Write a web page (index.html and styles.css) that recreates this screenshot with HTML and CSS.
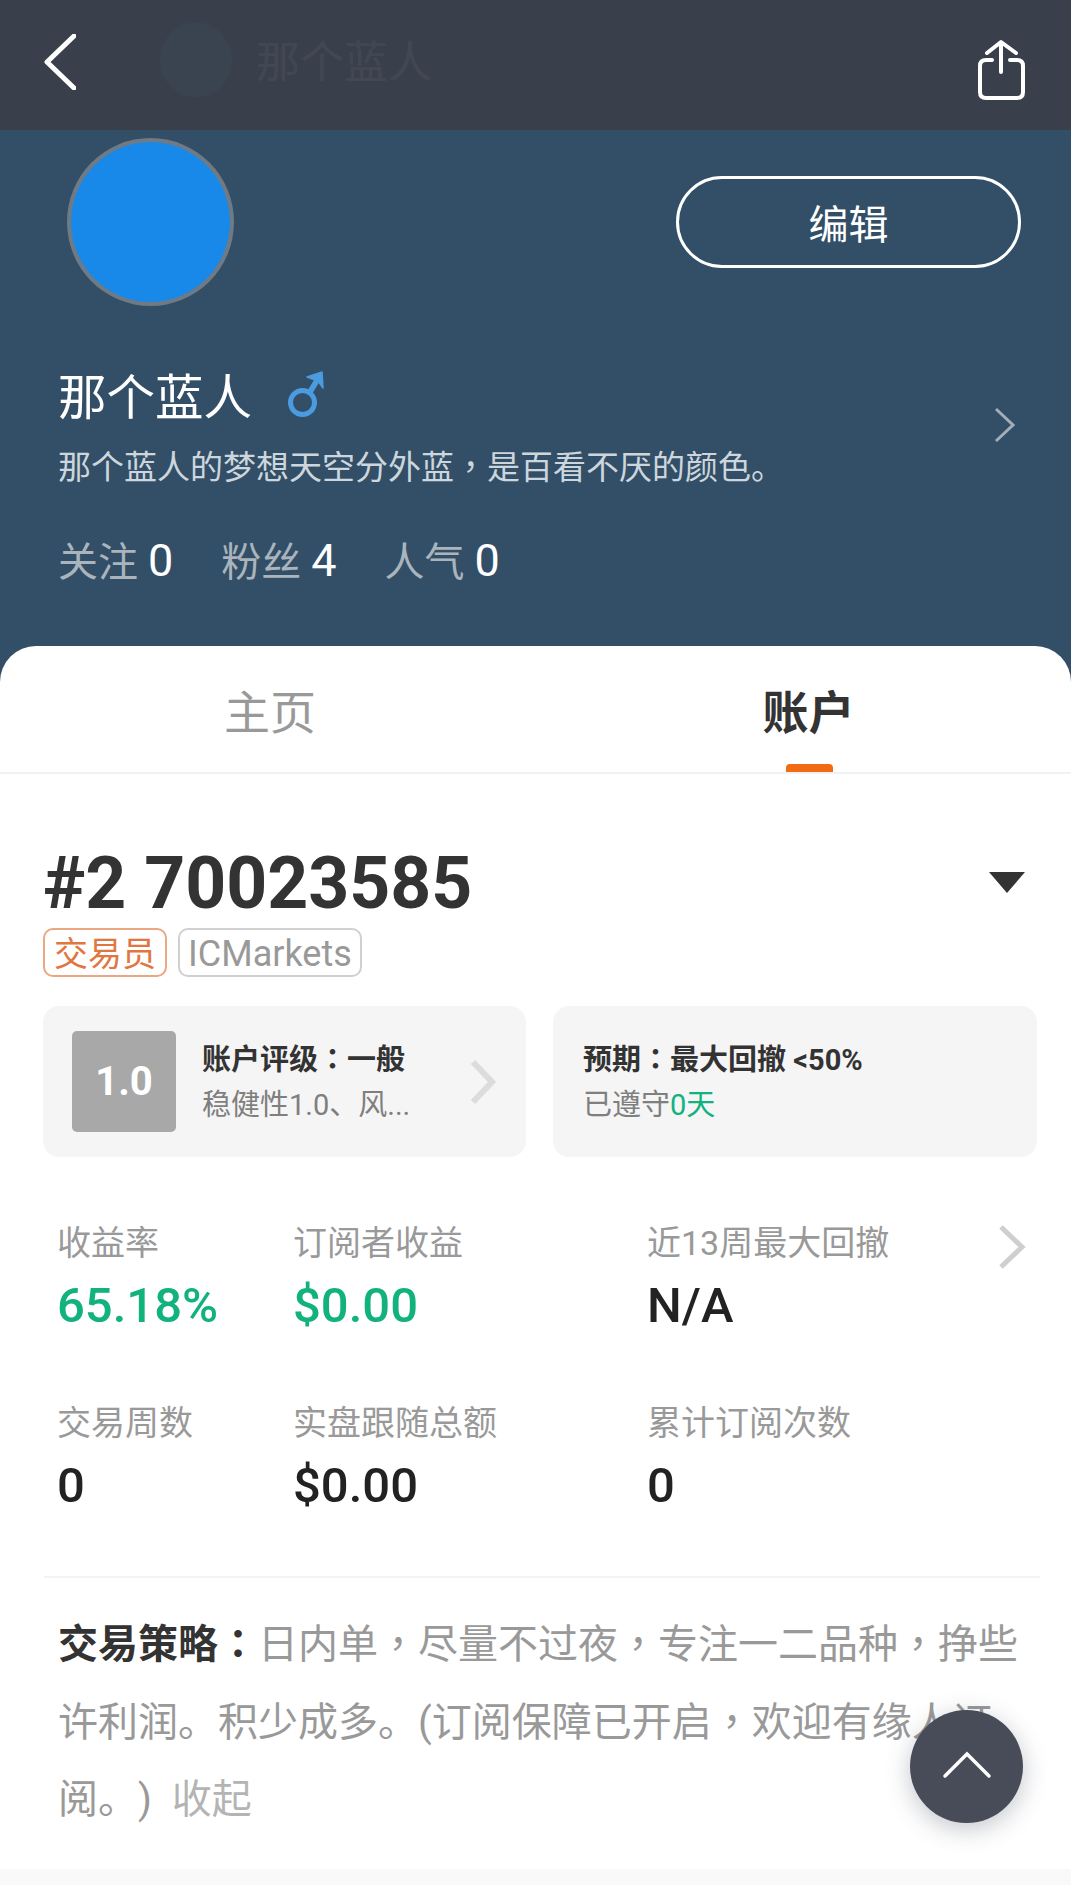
FILE: index.html
```html
<!DOCTYPE html>
<html lang="zh-CN">
<head>
    <meta charset="UTF-8">
    <meta name="viewport" content="width=device-width, initial-scale=1.0">
    <title>那个蓝人</title>
    <link rel="stylesheet" href="styles.css">
</head>
<body>
    <div class="page">
        <header class="topbar">
            <svg class="back-icon" width="32" height="56" viewBox="0 0 32 56"><path d="M30 2 L3 28 L30 54" fill="none" stroke="#fff" stroke-width="5" stroke-linecap="round" stroke-linejoin="round"/></svg>
            <div class="topbar-avatar"></div>
            <div class="topbar-name">那个蓝人</div>
            <svg class="share-icon" width="50" height="62" viewBox="0 0 50 62"><path d="M16 21 H10 Q4 21 4 27 V53 Q4 59 10 59 H41 Q47 59 47 53 V27 Q47 21 41 21 H34" fill="none" stroke="#fff" stroke-width="4" stroke-linecap="round"/><path d="M25 33 V4 M11 14 L25 3 L40 14" fill="none" stroke="#fff" stroke-width="4" stroke-linecap="round" stroke-linejoin="round"/></svg>
        </header>

        <section class="hero">
            <div class="hero-top">
                <div class="avatar"></div>
                <button class="edit-btn">编辑</button>
            </div>
            <div class="profile">
                <div class="profile-text">
                    <div class="name-row">
                        <span class="name">那个蓝人</span>
                        <svg class="male-icon" width="42" height="52" viewBox="0 0 42 52"><circle cx="18.5" cy="34.5" r="12" fill="none" stroke="#4a9be0" stroke-width="5"/><path d="M26 24 L35 9" fill="none" stroke="#4a9be0" stroke-width="5.5"/><path d="M23 9 L38 4 L39 20 L34 13 Z" fill="#4a9be0" stroke="#4a9be0" stroke-width="1.5" stroke-linejoin="round"/></svg>
                    </div>
                    <p class="bio">那个蓝人的梦想天空分外蓝<span class="pc" lang="zh-TW">，</span>是百看不厌的颜色。</p>
                </div>
                <svg class="hero-arrow" width="22" height="36" viewBox="0 0 22 36"><path d="M2 2 L19 18 L2 34" fill="none" stroke="#a3aeb8" stroke-width="3"/></svg>
            </div>
            <div class="follow-row">
                <span class="follow-item">关注<b>0</b></span>
                <span class="follow-item">粉丝<b>4</b></span>
                <span class="follow-item">人气<b>0</b></span>
            </div>
        </section>

        <main class="panel">
            <nav class="tabs">
                <a class="tab">主页</a>
                <a class="tab active">账户</a>
            </nav>

            <div class="account">
                <div class="account-title">
                    <h1>#2 70023585</h1>
                    <span class="caret"></span>
                </div>
                <div class="tags">
                    <span class="tag tag-orange">交易员</span>
                    <span class="tag tag-gray">ICMarkets</span>
                </div>
                <div class="cards">
                    <div class="card">
                        <div class="grade">1.0</div>
                        <div class="card-text">
                            <div class="card-title">账户评级<span class="pc" lang="zh-TW">：</span>一般</div>
                            <div class="card-sub">稳健性1.0、风...</div>
                        </div>
                        <svg class="card-arrow" width="28" height="50" viewBox="0 0 28 50"><path d="M4 5 L23 25 L4 45" fill="none" stroke="#dcdcdc" stroke-width="6"/></svg>
                    </div>
                    <div class="card card-plain">
                        <div class="card-text">
                            <div class="card-title">预期<span class="pc" lang="zh-TW">：</span>最大回撤 &lt;50%</div>
                            <div class="card-sub">已遵守<span class="green">0天</span></div>
                        </div>
                    </div>
                </div>
            </div>

            <div class="stats">
                <div class="stat"><div class="stat-label">收益率</div><div class="stat-value green">65.18%</div></div>
                <div class="stat"><div class="stat-label">订阅者收益</div><div class="stat-value green">$0.00</div></div>
                <div class="stat"><div class="stat-label">近13周最大回撤</div><div class="stat-value">N/A</div></div>
                <svg class="stat-arrow" width="28" height="46" viewBox="0 0 28 46"><path d="M3 3 L24 23 L3 43" fill="none" stroke="#cfcfcf" stroke-width="5"/></svg>
                <div class="stat"><div class="stat-label">交易周数</div><div class="stat-value">0</div></div>
                <div class="stat"><div class="stat-label">实盘跟随总额</div><div class="stat-value">$0.00</div></div>
                <div class="stat"><div class="stat-label">累计订阅次数</div><div class="stat-value">0</div></div>
            </div>
            <div class="divider"></div>

            <div class="strategy">
                <p><b>交易策略<span class="pc" lang="zh-TW">：</span></b>日内单<span class="pc" lang="zh-TW">，</span>尽量不过夜<span class="pc" lang="zh-TW">，</span>专注一二品种<span class="pc" lang="zh-TW">，</span>挣些许利润。积少成多。(订阅保障已开启<span class="pc" lang="zh-TW">，</span>欢迎有缘人订阅。) <span class="collapse">收起</span></p>
            </div>
            <div class="band"></div>
        </main>

        <button class="fab">
            <svg width="50" height="29" viewBox="0 0 50 29"><path d="M3 26 L25 4 L47 26" fill="none" stroke="#fff" stroke-width="3.5" stroke-linecap="round"/></svg>
        </button>
    </div>
</body>
</html>
```

FILE: styles.css
```css
* {
    box-sizing: border-box;
}

body {
    margin: 0;
    background-color: #fff;
    font-family: Roboto, "Noto Sans CJK SC", sans-serif;
}

.page {
    position: relative;
    width: 1071px;
    height: 1904px;
    overflow: hidden;
    text-spacing-trim: space-all;
}

/* comma and colon sit in the middle of the box in the reference */
.pc {
    font-family: Roboto, "Noto Sans CJK TC", sans-serif;
}

.topbar {
    display: flex;
    align-items: center;
    height: 130px;
    padding: 0 45px 0 44px;
    background-color: #3a404b;
}

.back-icon {
    margin-top: -6px;
}

.topbar-avatar {
    width: 72px;
    height: 76px;
    margin: -10px 0 0 84px;
    border-radius: 50%;
    background-color: #394450;
}

.topbar-name {
    margin: -12px 0 0 24px;
    font-size: 44px;
    color: #424853;
}

.share-icon {
    margin-left: auto;
    margin-top: 10px;
}

.hero {
    height: 560px;
    padding: 8px 55px 0 58px;
    background-color: #324f67;
}

.hero-top {
    display: flex;
    justify-content: space-between;
}

.avatar {
    width: 167px;
    height: 168px;
    margin-left: 9px;
    border: 4px solid #6f7a84;
    border-radius: 50%;
    background-color: #1889e9;
}

.edit-btn {
    width: 345px;
    height: 92px;
    margin: 38px -5px 0 0;
    border: 3px solid #fff;
    border-radius: 46px;
    background: none;
    font-family: inherit;
    font-size: 40px;
    color: #fff;
}

.profile {
    display: flex;
    align-items: center;
    justify-content: space-between;
    margin-top: 60px;
}

.name-row {
    display: flex;
    align-items: center;
    height: 56px;
}

.name {
    font-size: 48.5px;
    color: #fff;
}

.male-icon {
    margin-left: 32px;
}

.bio {
    margin: 24px 0 0;
    font-size: 33px;
    line-height: 44px;
    color: #cdd6dd;
}

.hero-arrow {
    margin-top: -6px;
}

.follow-row {
    display: flex;
    gap: 48px;
    margin-top: 43px;
    line-height: 56px;
}

.follow-item {
    font-size: 40px;
    color: #aab4bd;
}

.follow-item b {
    margin-left: 10px;
    font-size: 45px;
    font-weight: 400;
    color: #fff;
}

.panel {
    position: relative;
    margin-top: -44px;
    height: 1258px;
    border-radius: 36px 36px 0 0;
    background-color: #fff;
}

.tabs {
    display: grid;
    grid-template-columns: 540px 537px;
    height: 128px;
    border-bottom: 2px solid #f2f2f2;
}

.tab {
    position: relative;
    height: 126px;
    text-align: center;
    font-size: 46px;
    line-height: 134px;
    color: #999;
}

.tab.active {
    font-weight: 700;
    color: #333;
}

.tab.active::after {
    content: "";
    position: absolute;
    left: 246px;
    bottom: 0;
    width: 47px;
    height: 8px;
    border-radius: 4px 4px 0 0;
    background-color: #f26a13;
}

.account {
    padding: 70px 34px 0 43px;
}

.account-title {
    display: flex;
    align-items: center;
    justify-content: space-between;
}

.account-title h1 {
    margin: 0;
    font-size: 71.5px;
    font-weight: 700;
    line-height: 80px;
    color: #333;
}

.caret {
    width: 0;
    height: 0;
    margin: -4px 12px 0 0;
    border-left: 18px solid transparent;
    border-right: 18px solid transparent;
    border-top: 21px solid #333;
}

.tags {
    display: flex;
    gap: 11px;
    margin-top: 4px;
}

.tag {
    height: 49px;
    padding: 0 9px;
    border-radius: 10px;
    font-size: 34px;
    line-height: 48px;
}

.tag-orange {
    border: 2px solid #eba783;
    color: #e2763f;
}

.tag-gray {
    padding: 0 8px;
    border: 2px solid #d0d0d0;
    font-size: 36px;
    line-height: 49px;
    color: #999;
}

.cards {
    display: grid;
    grid-template-columns: 483px 484px;
    gap: 27px;
    margin-top: 29px;
}

.card {
    display: flex;
    align-items: center;
    height: 151px;
    padding: 0 29px;
    border-radius: 16px;
    background-color: #f5f5f5;
}

.card-plain {
    padding-left: 30px;
}

.grade {
    flex: none;
    width: 104px;
    height: 101px;
    margin-right: 26px;
    border-radius: 5px;
    background-color: #a8a8a8;
    text-align: center;
    font-size: 40px;
    font-weight: 700;
    line-height: 101px;
    color: #fff;
}

.card-text {
    flex: 1;
    padding-top: 2px;
}

.card-title {
    font-size: 29px;
    font-weight: 700;
    line-height: 44px;
    color: #333;
}

.card-sub {
    margin-top: 1px;
    font-size: 29px;
    line-height: 44px;
    color: #7f7f7f;
}

.green {
    color: #12b27f;
}

.stats {
    display: grid;
    grid-template-columns: 236px 354px 1fr auto;
    row-gap: 65px;
    padding: 64px 45px 60px 57px;
}

.stat-label {
    font-size: 34px;
    line-height: 44px;
    color: #999;
}

.stat-value {
    margin-top: 11px;
    font-size: 49px;
    font-weight: 500;
    line-height: 60px;
    color: #222;
}

.stat-value.green {
    color: #12b27f;
}

.stat-arrow {
    grid-column: 4;
    grid-row: 1;
    margin-top: 3px;
}

.divider {
    height: 2px;
    margin: 0 31px 0 44px;
    background-color: #f4f4f4;
}

.strategy {
    padding: 28px 50px 0 58px;
}

.strategy p {
    margin: 0;
    font-size: 40px;
    line-height: 77.5px;
    color: #999;
}

.strategy b {
    font-weight: 700;
    color: #333;
}

.collapse {
    margin-left: 10px;
    color: #b4b4b4;
}

.band {
    height: 16px;
    margin-top: 30px;
    background-color: #f9f9f9;
}

.fab {
    position: absolute;
    left: 910px;
    top: 1710px;
    display: flex;
    align-items: flex-start;
    justify-content: center;
    width: 113px;
    height: 113px;
    padding: 40px 0 0;
    border: none;
    border-radius: 50%;
    background-color: #484b58;
    box-shadow: 0 6px 24px rgba(60, 65, 85, 0.3);
}
```
